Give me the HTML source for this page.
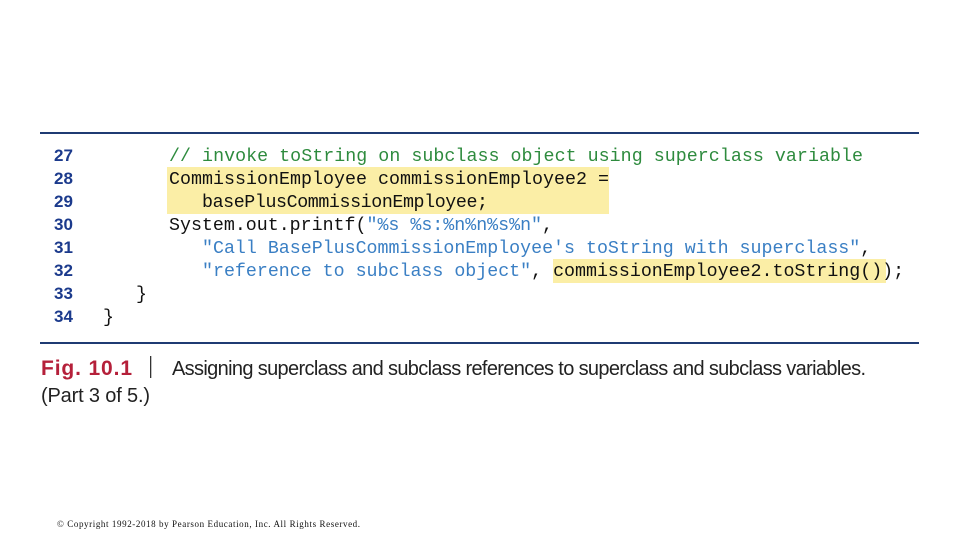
<!DOCTYPE html>
<html><head><meta charset="utf-8"><style>
html,body{margin:0;padding:0;background:#fff;width:960px;height:540px;overflow:hidden}
svg{display:block}
.c{font-family:"Liberation Mono",monospace;font-size:18.3px}
.n{font-family:"Liberation Sans",sans-serif;font-weight:bold;font-size:17px;fill:#1b3a8c}
.cap{font-family:"Liberation Sans",sans-serif;font-size:20px;fill:#222}
</style></head><body>
<svg width="960" height="540" xmlns="http://www.w3.org/2000/svg">
<rect x="40" y="132" width="879" height="2" fill="#1f3b73"/>
<rect x="40" y="342" width="879" height="2" fill="#1f3b73"/>
<rect x="167" y="167" width="442" height="47" fill="#fbeea6"/>
<rect x="553" y="259" width="333" height="24" fill="#fbeea6"/>
<g class="n">
<text x="54" y="161">27</text><text x="54" y="184">28</text><text x="54" y="207">29</text><text x="54" y="230">30</text>
<text x="54" y="253">31</text><text x="54" y="276">32</text><text x="54" y="299">33</text><text x="54" y="322">34</text>
</g>
<g class="c" fill="#111">
<text x="169" y="161" fill="#2e8b3e" textLength="694">// invoke toString on subclass object using superclass variable</text>
<text x="169" y="184" textLength="440">CommissionEmployee commissionEmployee2 =</text>
<text x="202" y="207" textLength="286">basePlusCommissionEmployee;</text>
<text x="169" y="230"><tspan>System.out.printf(</tspan><tspan fill="#3a7fc4">"%s %s:%n%n%s%n"</tspan><tspan>,</tspan></text>
<text x="202" y="253"><tspan fill="#3a7fc4">"Call BasePlusCommissionEmployee's toString with superclass"</tspan><tspan>,</tspan></text>
<text x="202" y="276"><tspan fill="#3a7fc4">"reference to subclass object"</tspan><tspan>, commissionEmployee2.toString());</tspan></text>
<text x="136" y="299">}</text>
<text x="103" y="322">}</text>
</g>
<text x="41" y="375" font-family="Liberation Sans,sans-serif" font-weight="bold" font-size="21" fill="#b5203a" textLength="91">Fig. 10.1</text>
<rect x="150" y="356" width="1.3" height="22" fill="#333"/>
<text x="172" y="375" class="cap" textLength="694">Assigning superclass and subclass references to superclass and subclass variables.</text>
<text x="41" y="402" class="cap" textLength="109">(Part 3 of 5.)</text>
<text x="57" y="527" font-family="Liberation Serif,serif" font-size="9" fill="#111" textLength="303">© Copyright 1992-2018 by Pearson Education, Inc. All Rights Reserved.</text>
</svg>
</body></html>
